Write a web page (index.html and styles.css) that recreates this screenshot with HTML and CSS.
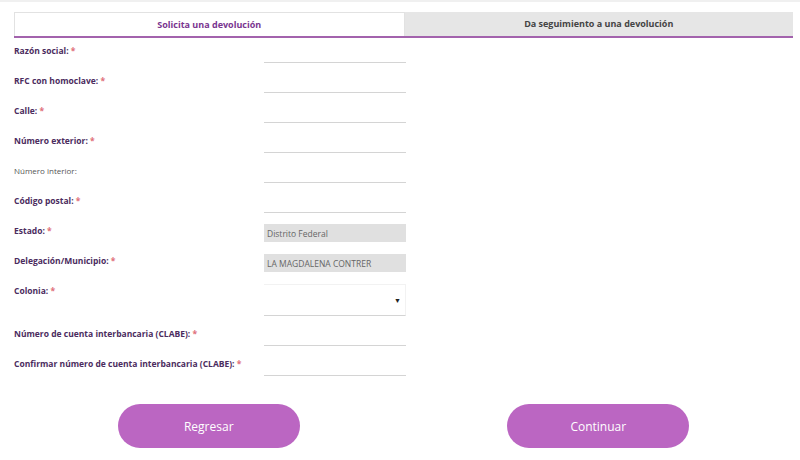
FILE: index.html
```html
<!DOCTYPE html>
<html lang="es">
<head>
  <meta charset="UTF-8" />
  <title>Solicita una devolución</title>
  <link rel="stylesheet" href="styles.css">
</head>
<body>
  <div class="page">
    <div class="tabs">
      <div class="tab active">Solicita una devolución</div>
      <div class="tab">Da seguimiento a una devolución</div>
    </div>

    <form class="form">
      <div class="row">
        <label class="label">Razón social: <span class="req">*</span></label>
        <input class="field" type="text">
      </div>
      <div class="row">
        <label class="label">RFC con homoclave: <span class="req">*</span></label>
        <input class="field" type="text">
      </div>
      <div class="row">
        <label class="label">Calle: <span class="req">*</span></label>
        <input class="field" type="text">
      </div>
      <div class="row">
        <label class="label">Número exterior: <span class="req">*</span></label>
        <input class="field" type="text">
      </div>
      <div class="row">
        <label class="label optional">Número interior:</label>
        <input class="field" type="text">
      </div>
      <div class="row">
        <label class="label">Código postal: <span class="req">*</span></label>
        <input class="field" type="text">
      </div>
      <div class="row">
        <label class="label">Estado: <span class="req">*</span></label>
        <input class="field locked" type="text" value="Distrito Federal" readonly>
      </div>
      <div class="row">
        <label class="label">Delegación/Municipio: <span class="req">*</span></label>
        <input class="field locked" type="text" value="LA MAGDALENA CONTRER" readonly>
      </div>
      <div class="row">
        <label class="label">Colonia: <span class="req">*</span></label>
        <div class="select">
          <span class="arrow">▼</span>
        </div>
      </div>
      <div class="row">
        <label class="label">Número de cuenta interbancaria (CLABE): <span class="req">*</span></label>
        <input class="field" type="text">
      </div>
      <div class="row">
        <label class="label">Confirmar número de cuenta interbancaria (CLABE): <span class="req">*</span></label>
        <input class="field" type="text">
      </div>

      <div class="actions">
        <div class="action"><button type="button" class="btn">Regresar</button></div>
        <div class="action"><button type="button" class="btn">Continuar</button></div>
      </div>
    </form>
  </div>
</body>
</html>
```

FILE: styles.css
```css
body {
  margin: 0;
  font-family: "Open Sans", Arial, sans-serif;
  background: #fff;
  border-top: 2px solid #f0f0f0;
}

.page {
  padding: 10px 7px 0 14px;
}

.tabs {
  display: flex;
  border-bottom: 2px solid #a363ad;
}

.tab {
  flex: 1;
  height: 24px;
  line-height: 24px;
  text-align: center;
  font-size: 9px;
  font-weight: bold;
  color: #444;
  background: #e6e6e6;
}

.tab.active {
  background: #fff;
  color: #7a3590;
  border: 1px solid #e2e2e2;
  border-bottom: none;
  height: 23px;
}

.form {
  display: flex;
  flex-direction: column;
  gap: 11px;
  padding-top: 6px;
}

.row {
  display: grid;
  grid-template-columns: 250px 142px;
  align-items: start;
}

.label {
  font-size: 8.5px;
  font-weight: bold;
  color: #4b2c5e;
  line-height: 14px;
}

.label.optional {
  font-size: 8px;
  font-weight: normal;
  color: #555;
}

.req {
  color: #e0707a;
}

.field {
  box-sizing: border-box;
  height: 19px;
  width: 142px;
  margin: 0;
  padding: 0 3px;
  border: none;
  border-bottom: 1px solid #d4d4d4;
  background: #fff;
  font-family: "Open Sans", Arial, sans-serif;
  font-size: 8.5px;
  color: #666;
  outline: none;
}

.field.locked {
  background: #e0e0e0;
  border-bottom: 1px solid #fff;
}

.select {
  box-sizing: border-box;
  height: 32px;
  border-top: 1px solid #f2f2f2;
  border-right: 1px solid #f2f2f2;
  border-bottom: 1px solid #d4d4d4;
  display: flex;
  align-items: center;
  justify-content: flex-end;
  padding-right: 4px;
}

.arrow {
  font-size: 7px;
  color: #222;
}

.actions {
  display: flex;
  margin-top: 17px;
}

.action {
  flex: 1;
  display: flex;
  justify-content: center;
}

.btn {
  width: 182px;
  height: 44px;
  border: none;
  border-radius: 22px;
  background: #bb66c2;
  color: #fff;
  font-family: "Open Sans", Arial, sans-serif;
  font-size: 12px;
  cursor: pointer;
}
```
